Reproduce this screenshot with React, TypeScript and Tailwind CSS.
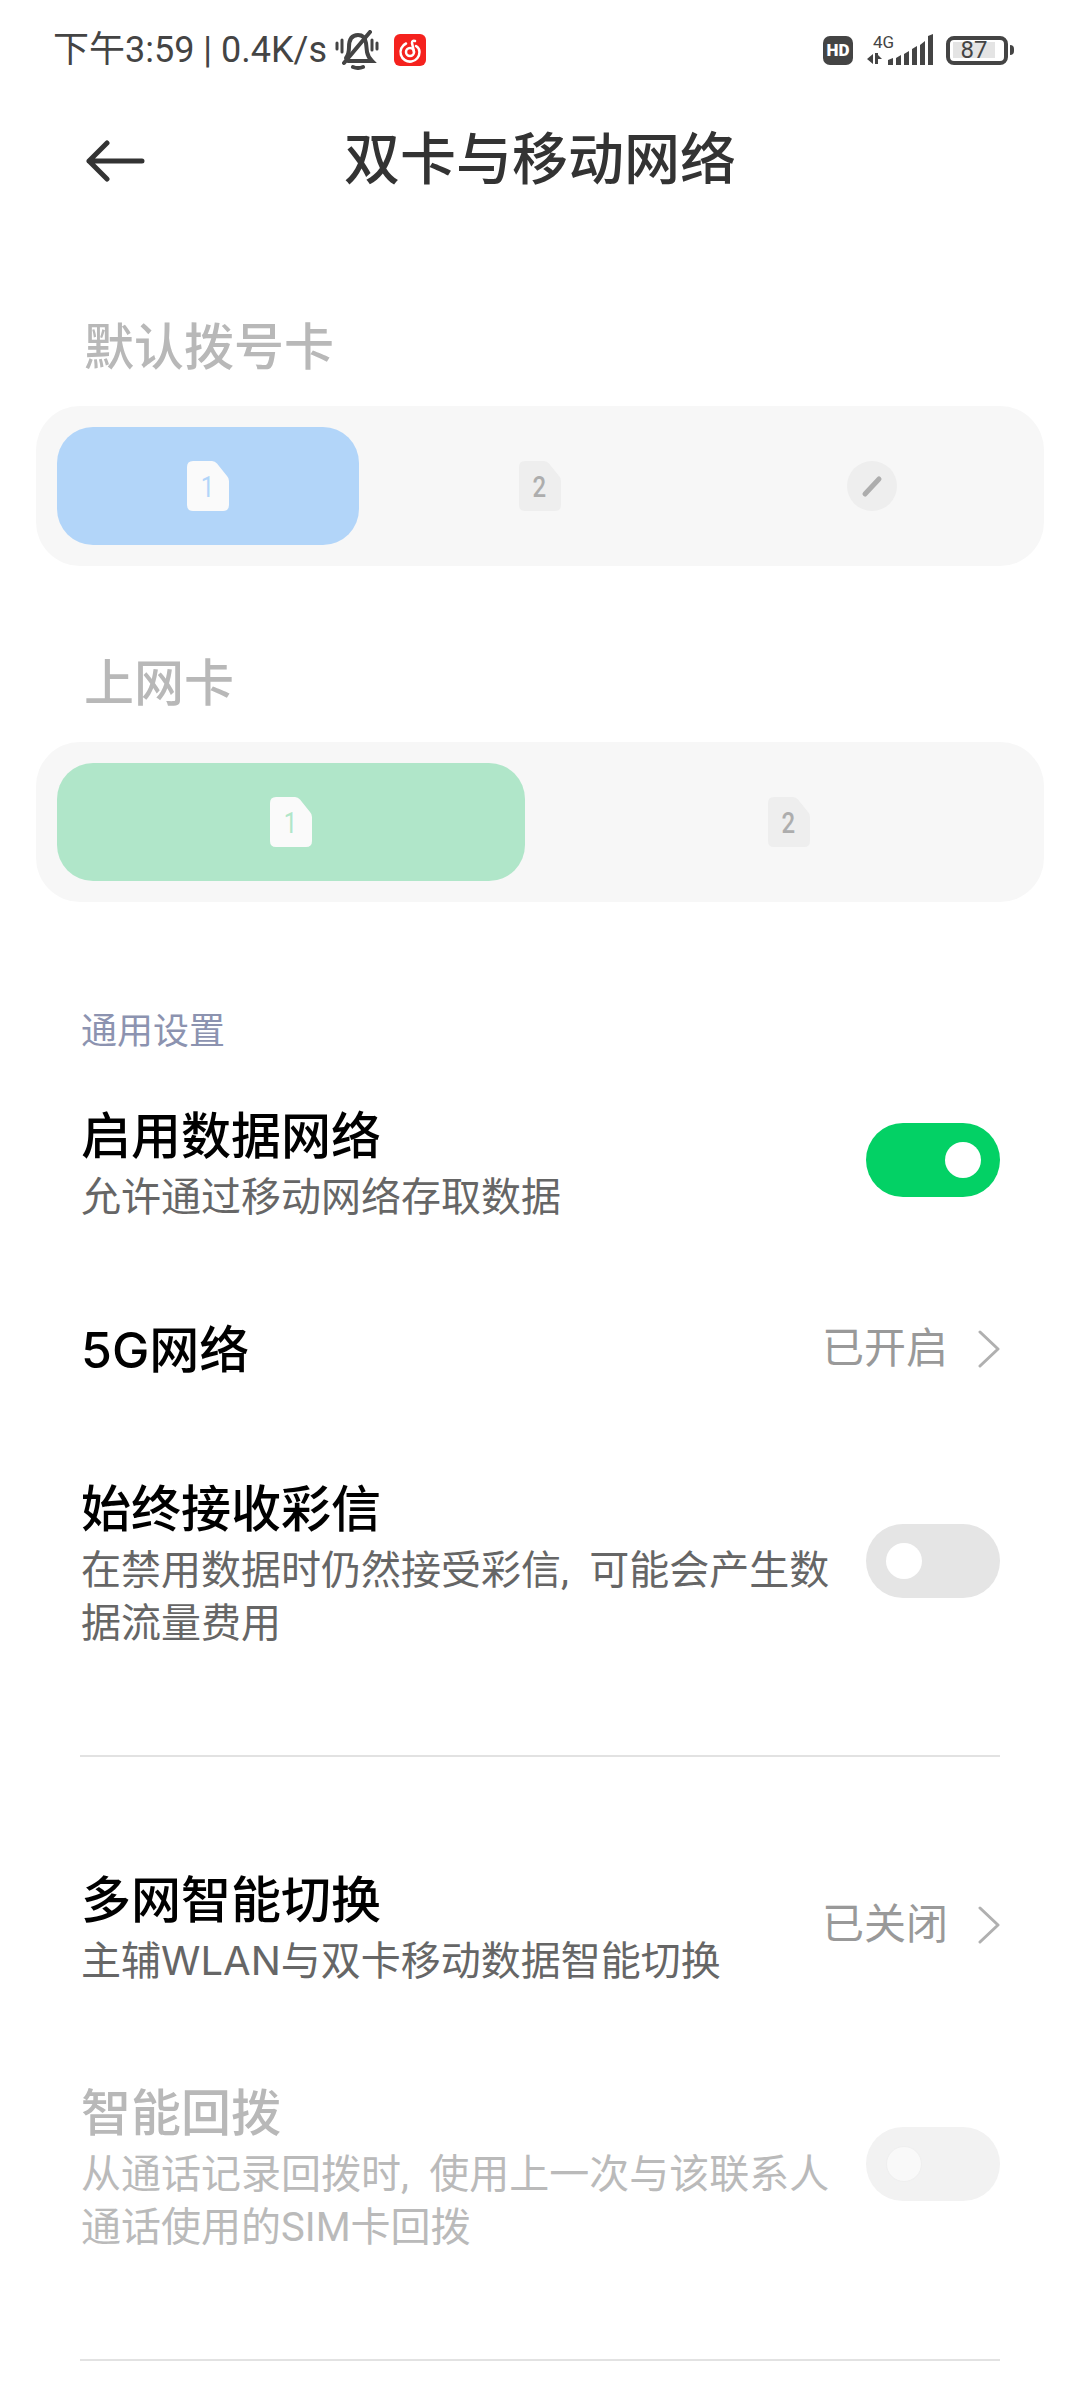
import { ReactNode } from 'react';

const cjk = 'font-["Roboto","Noto_Sans_CJK_SC",sans-serif]';

const SimIcon = ({ num, active, color }: { num: string; active?: boolean; color?: string }) => (
  <svg width="42" height="50" viewBox="0 0 42 50">
    <path
      d="M6 0H25Q28 0 30 2.5L40 15Q42 17 42 20V44Q42 50 36 50H6Q0 50 0 44V6Q0 0 6 0Z"
      fill={active ? '#fafafa' : '#eeeeee'}
    />
    <text
      x="25.5"
      y="36"
      transform="scale(0.8 1)"
      textAnchor="middle"
      fontSize="30"
      fontWeight={active ? '400' : '500'}
      fontFamily="Roboto, sans-serif"
      fill={active ? color : '#adadad'}
    >
      {num}
    </text>
  </svg>
);

const PencilIcon = () => (
  <div className="flex h-[50px] w-[50px] items-center justify-center rounded-full bg-[#eeeeee]">
    <svg width="24" height="24" viewBox="0 0 24 24" fill="none" stroke="#adadad" strokeWidth="5" strokeLinecap="round">
      <path d="M5 20L19 5" />
    </svg>
  </div>
);

const SimPanel = ({ children }: { children: ReactNode }) => (
  <div className="mx-[36px] flex h-[160px] gap-[30px] rounded-[44px] bg-[#f7f7f7] p-[21px]">{children}</div>
);

const Cell = ({ children, bg }: { children: ReactNode; bg?: string }) => (
  <div className={`flex flex-1 items-center justify-center rounded-[36px] ${bg ?? ''}`}>{children}</div>
);

const Toggle = ({ state, className }: { state: 'on' | 'off' | 'disabled'; className: string }) => {
  if (state === 'on') {
    return (
      <div className={`flex h-[74px] w-[134px] shrink-0 items-center justify-end rounded-full bg-[#03d165] pr-[19px] ${className}`}>
        <div className="h-[36px] w-[36px] rounded-full bg-white" />
      </div>
    );
  }
  return (
    <div
      className={`flex h-[74px] w-[134px] shrink-0 items-center rounded-full pl-[20px] ${className} ${
        state === 'off' ? 'bg-[#e5e5e5]' : 'bg-[#f2f2f2]'
      }`}
    >
      <div
        className={`h-[36px] w-[36px] rounded-full ${
          state === 'off' ? 'bg-white' : 'border border-[#efefef] bg-[#f9f9f9]'
        }`}
      />
    </div>
  );
};

const Value = ({ text, className }: { text: string; className: string }) => (
  <div className={`flex shrink-0 items-center gap-[30px] ${className}`}>
    <span className="text-[42px] leading-[50px] text-[#999999]">{text}</span>
    <svg width="22" height="38" viewBox="0 0 22 38" fill="none" stroke="#b0b0b0" strokeWidth="3" strokeLinecap="round" strokeLinejoin="round">
      <path d="M2 2L20 19L2 36" />
    </svg>
  </div>
);

const Row = ({
  title,
  sub,
  right,
  disabled,
  className,
}: {
  title: ReactNode;
  sub?: ReactNode;
  right: ReactNode;
  disabled?: boolean;
  className: string;
}) => (
  <div className={`flex items-center justify-between pl-[81px] pr-[80px] ${className}`}>
    <div className="w-[760px] min-w-0">
      <div className={`h-[60px] text-[50px] font-medium leading-[60px] ${disabled ? 'text-[#b8b8b8]' : 'text-black'}`}>{title}</div>
      {sub && (
        <div className={`mt-[4px] text-[40px] leading-[53px] ${disabled ? 'text-[#bababa]' : 'text-[#666666]'}`}>{sub}</div>
      )}
    </div>
    {right}
  </div>
);

const Label = ({ text, className }: { text: string; className: string }) => (
  <div className={`pl-[84px] text-[50px] font-medium leading-[84px] text-[#b8b8b8] ${className}`}>{text}</div>
);

const StatusBar = () => (
  <div className="flex h-[100px] items-center justify-between pl-[53px] pr-[66px] text-[#444444]">
    <div className="flex items-center">
      <span className="text-[36px] leading-[40px]">下午3:59 | 0.4K/s</span>
      {/* muted bell */}
      <svg className="ml-[8px]" width="44" height="40" viewBox="0 0 44 40" fill="none" stroke="#444444" strokeWidth="4" strokeLinecap="round">
        <path d="M11 28Q14 24 14 17Q14 5 23 5Q30 5 31 13L32 22Q33 27 37 31H13" />
        <path d="M35 2L9 33" />
        <path d="M2 13V19M7 10V22M37 10V20M42 13V19" strokeWidth="3" />
        <path d="M18 37Q23 39 28 37" />
      </svg>
      <svg className="ml-[15px]" width="32" height="32" viewBox="0 0 32 32">
        <rect width="32" height="32" rx="6" fill="#f5221e" />
        <path d="M12 9.5A9.5 9.5 0 1 0 25.5 18Q25.5 14 22 12" fill="none" stroke="white" strokeWidth="2.5" strokeLinecap="round" />
        <circle cx="16" cy="18" r="4" fill="none" stroke="white" strokeWidth="2.5" />
        <path d="M20 18L18 9Q18 6 21 7" fill="none" stroke="white" strokeWidth="2.5" strokeLinecap="round" />
      </svg>
    </div>
    <div className="flex items-center">
      <div className="flex h-[29px] w-[30px] items-center justify-center rounded-[7px] bg-[#444444] text-[17px] font-black leading-none text-white">HD</div>
      <svg className="ml-[14px]" width="68" height="40" viewBox="0 -4 68 40" fill="#444444">
        <text x="6" y="14" fontSize="17" fontFamily="Roboto, sans-serif">4G</text>
        <path d="M6 20V30L0 25ZM8 19H11L11 30H8ZM11 21L15 25H11Z" />
        <path d="M20 26L25 24V31H20ZM28 24L33 21V31H28ZM36 20L41 17V31H36ZM44 15L49 12V31H44ZM52 11L57 7V31H52ZM60 2L65 0V31H60Z" transform="translate(1 0)" />
      </svg>
      <div className="ml-[11px] flex h-[29px] w-[62px] items-center rounded-[8px] border-[4px] border-[#444444] pl-[3px]">
        <div className="flex h-[16px] w-[42px] items-center justify-center bg-[#e4e4e4] text-[24px] leading-none text-[#444444]">87</div>
      </div>
      <div className="ml-[2px] h-[10px] w-[4px] rounded-r-full bg-[#444444]" />
    </div>
  </div>
);

export default function App() {
  return (
    <div className={`h-[2400px] w-[1080px] overflow-hidden bg-white ${cjk}`}>
      <StatusBar />

      {/* Header */}
      <div className="grid h-[116px] grid-cols-[1fr_auto_1fr] items-center">
        <svg className="ml-[86px] mt-[5px]" width="60" height="44" viewBox="0 0 60 44" fill="none" stroke="#333333" strokeWidth="5" strokeLinecap="round" strokeLinejoin="round">
          <path d="M3 22H56M21 4L3 22L21 40" />
        </svg>
        <div className="mt-[4px] text-[56px] font-medium leading-[70px] text-[#333333]">双卡与移动网络</div>
        <div />
      </div>

      <Label text="默认拨号卡" className="mt-[90px] mb-[16px]" />
      <SimPanel>
        <Cell bg="bg-[#b2d5f9]">
          <SimIcon num="1" active color="#b2d5f9" />
        </Cell>
        <Cell>
          <SimIcon num="2" />
        </Cell>
        <Cell>
          <PencilIcon />
        </Cell>
      </SimPanel>

      <Label text="上网卡" className="mt-[76px] mb-[16px]" />
      <SimPanel>
        <Cell bg="bg-[#b0e6c9]">
          <SimIcon num="1" active color="#b0e6c9" />
        </Cell>
        <Cell>
          <SimIcon num="2" />
        </Cell>
      </SimPanel>

      <div className="mt-[106px] pl-[81px] text-[36px] leading-[48px] text-[#8c93b0]">通用设置</div>

      <Row className="mt-[51px]" title="启用数据网络" sub="允许通过移动网络存取数据" right={<Toggle state="on" className="mb-[12px]" />} />
      <Row
        className="mt-[97px]"
        title={
          <>
            <span className="font-['Inter'] leading-none">5G</span>网络
          </>
        }
        right={<Value text="已开启" className="mb-[4px]" />}
      />
      <Row
        className="mt-[99px]"
        title="始终接收彩信"
        sub={'在禁用数据时仍然接受彩信,\u2002可能会产生数据流量费用'}
        right={<Toggle state="off" className="mb-[8px]" />}
      />

      <div className="mx-[80px] mt-[105px] h-[2px] bg-[#e2e2e2]" />

      <Row
        className="mt-[114px]"
        title="多网智能切换"
        sub={
          <>
            主辅<span className="font-['Inter'] leading-none">WLAN</span>与双卡移动数据智能切换
          </>
        }
        right={<Value text="已关闭" className="mb-[10px]" />}
      />
      <Row
        className="mt-[96px]"
        disabled
        title="智能回拨"
        sub="从通话记录回拨时,&#8194;使用上一次与该联系人通话使用的SIM卡回拨"
        right={<Toggle state="disabled" className="mb-[10px]" />}
      />

      <div className="mx-[80px] mt-[105px] h-[2px] bg-[#e2e2e2]" />
    </div>
  );
}
